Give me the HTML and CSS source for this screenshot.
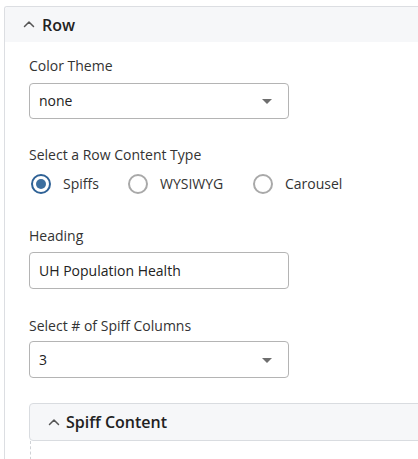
FILE: index.html
```html
<!DOCTYPE html>
<html>
<head>
<meta charset="utf-8">
<link rel="stylesheet" href="styles.css">
</head>
<body>
<div class="panel">
  <div class="panel-header">
    <svg class="chev" width="12" height="8" viewBox="0 0 12 8"><path d="M1.5 6.5 L6 2 L10.5 6.5" fill="none" stroke="#555" stroke-width="1.5" stroke-linecap="round" stroke-linejoin="round"/></svg>
    <span class="panel-title">Row</span>
  </div>
  <div class="panel-body">
    <div class="group g1">
      <div class="label">Color Theme</div>
      <div class="field select"><span>none</span><span class="caret"></span></div>
    </div>
    <div class="group g2">
      <div class="label">Select a Row Content Type</div>
      <div class="radios">
        <div class="radio-item"><span class="radio checked"></span><span class="rlabel">Spiffs</span></div>
        <div class="radio-item"><span class="radio"></span><span class="rlabel">WYSIWYG</span></div>
        <div class="radio-item"><span class="radio"></span><span class="rlabel">Carousel</span></div>
      </div>
    </div>
    <div class="group g3">
      <div class="label">Heading</div>
      <div class="field input"><span>UH Population Health</span></div>
    </div>
    <div class="group g4">
      <div class="label">Select # of Spiff Columns</div>
      <div class="field select"><span>3</span><span class="caret"></span></div>
    </div>
    <div class="sub">
      <div class="sub-header">
        <svg class="chev" width="12" height="8" viewBox="0 0 12 8"><path d="M1.5 6.5 L6 2 L10.5 6.5" fill="none" stroke="#555" stroke-width="1.5" stroke-linecap="round" stroke-linejoin="round"/></svg>
        <span class="sub-title">Spiff Content</span>
      </div>
      <div class="sub-body"></div>
    </div>
  </div>
</div>
</body>
</html>
```
FILE: styles.css
```css
html, body {
  margin: 0;
  padding: 0;
  background: #fff;
  overflow: hidden;
  height: 459px;
}
body {
  font-family: "Open Sans", "Noto Sans", sans-serif;
  color: #333;
  font-size: 14px;
  line-height: 20px;
}
.panel {
  box-sizing: border-box;
  margin: 6px 0 0 4px;
  width: 414px;
  height: 453px;
  overflow: hidden;
  border-top: 1px solid #dcdee2;
  border-left: 1px solid #dcdee2;
  border-top-left-radius: 3px;
}
.panel-header {
  height: 35px;
  background: #f6f7f9;
  display: flex;
  align-items: center;
  padding-left: 18px;
  gap: 7px;
}
.chev {
  display: block;
  margin-top: -1px;
}
.panel-title {
  font-size: 16px;
  font-weight: 600;
  color: #222;
}
.panel-body {
  padding: 14px 0 0 24px;
}
.label {
  height: 20px;
}
.group {
  display: flex;
  flex-direction: column;
}
.g1 { gap: 7px; margin-bottom: 26px; }
.g2 { gap: 7px; margin-bottom: 30px; }
.g3 { gap: 6px; margin-bottom: 27px; }
.g4 { gap: 5px; margin-bottom: 25px; }
.field {
  box-sizing: border-box;
  width: 260px;
  height: 37px;
  border: 1px solid #b4b4b4;
  border-radius: 4px;
  display: flex;
  align-items: center;
  justify-content: space-between;
  padding: 0 16px 0 9px;
  color: #222;
}
.g1 .field { height: 36px; }
.caret {
  width: 0;
  height: 0;
  border-left: 5px solid transparent;
  border-right: 5px solid transparent;
  border-top: 5px solid #6e6e6e;
  margin-top: 1px;
}
.radios {
  display: flex;
  align-items: center;
  height: 24px;
  padding-left: 2px;
}
.radio-item {
  display: flex;
  align-items: center;
  gap: 12px;
}
.radio-item:nth-child(1) { width: 97px; }
.radio-item:nth-child(2) { width: 125px; }
.radio {
  box-sizing: border-box;
  width: 20px;
  height: 20px;
  border: 2px solid #a9a9a9;
  border-radius: 50%;
  display: flex;
  align-items: center;
  justify-content: center;
}
.radio.checked {
  border-color: #2f6296;
}
.radio.checked::after {
  content: "";
  width: 10px;
  height: 10px;
  border-radius: 50%;
  background: #3d6f9f;
}
.rlabel {
  color: #333;
}
.sub {
  margin-right: -2px;
}
.sub-header {
  box-sizing: border-box;
  height: 38px;
  background: #f6f7f9;
  border: 1px solid #d9dce0;
  border-top-left-radius: 4px;
  border-bottom-left-radius: 4px;
  display: flex;
  align-items: center;
  padding-left: 18px;
  gap: 6px;
}
.sub-title {
  font-size: 16px;
  font-weight: 600;
  color: #222;
}
.sub-body {
  height: 40px;
  margin-left: 1px;
  border-left: 1px dashed #cfd2d6;
}
```
